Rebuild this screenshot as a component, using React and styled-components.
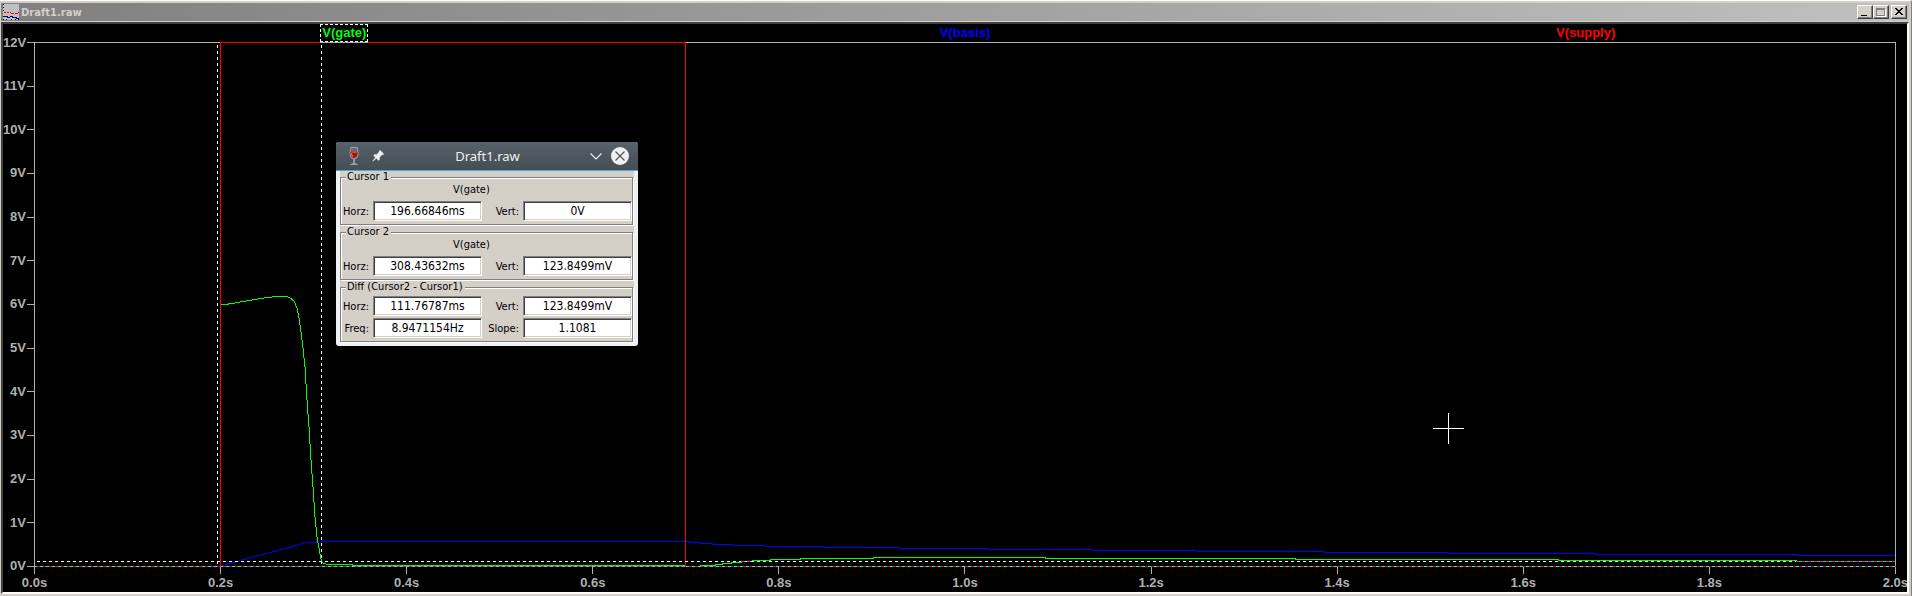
import React from "react";
import styled, { createGlobalStyle } from "styled-components";

const FACE = "#d4d0c8";
const AXIS = "#b0b0b0";
const GREEN = "#00ff00";
const BLUE = "#0000ff";
const RED = "#ff0000";

const GlobalStyle = createGlobalStyle`
  * { box-sizing: border-box; }
  body { margin: 0; background: ${FACE}; }
`;

/* ---------- plot window ---------- */

const PlotWindow = styled.div`
  display: flex;
  flex-direction: column;
  min-height: 100vh;
  padding: 2px 2px 2px 1px;
  background: ${FACE};
  border-top: 1px solid #fff;
  border-right: 1px solid #808080;
  overflow: hidden;
`;

const TitleBar = styled.header`
  display: flex;
  align-items: center;
  height: 18px;
  margin-bottom: 1px;
  padding: 0 2px;
  background: linear-gradient(90deg, #808080, #c0c0c0);
`;

const WindowTitle = styled.h1`
  flex: 1;
  margin: 0 0 0 2px;
  padding-top: 2px;
  font: bold 10px/16px "DejaVu Sans", Verdana, sans-serif;
  color: ${FACE};
`;

const WindowButton = styled.button`
  display: flex;
  width: 16px;
  height: 14px;
  margin: 0 0 0 ${(p) => (p.$apart ? "2px" : "0")};
  padding: 1px;
  background: ${FACE};
  border: 1px solid;
  border-color: #fff #404040 #404040 #fff;
  box-shadow: inset -1px -1px #808080;
`;

const Client = styled.main`
  position: relative;
  flex: 1;
  display: grid;
  grid-template-columns: 31px 1fr 11px;
  grid-template-rows: 18px 1fr 25px;
  background: #000;
  border: 2px solid;
  border-color: #404040 #fff #fff #404040;
  overflow: hidden;
  font: bold 13px/14px "Liberation Sans", Arial, sans-serif;
  color: ${AXIS};
`;

const Legend = styled.div`
  grid-column: 2;
  display: grid;
  grid-template-columns: repeat(3, 1fr);
  justify-items: center;
`;

const TraceName = styled.button`
  height: 18px;
  padding: 0 1px;
  background: none;
  border: 1px ${(p) => (p.$selected ? "dashed #fff" : "solid transparent")};
  font: inherit;
  line-height: 16px;
  color: ${(p) => p.$color};
`;

const YAxis = styled.div`
  grid-column: 1;
  grid-row: 2;
  display: flex;
  flex-direction: column;
  justify-content: space-between;
`;

const YTick = styled.div`
  display: flex;
  align-items: center;
  justify-content: flex-end;
  gap: 1px;
  height: 1px;

  &::after {
    content: "";
    width: 7px;
    height: 1px;
    background: ${AXIS};
  }
`;

const PlotArea = styled.div`
  position: relative;
  grid-column: 2;
  grid-row: 2;
  min-height: 300px;
`;

const Traces = styled.svg`
  position: absolute;
  inset: 0;
  width: 100%;
  height: 100%;
  fill: none;
  shape-rendering: crispEdges;

  path { vector-effect: non-scaling-stroke; }
`;

const Crosshair = styled.svg`
  position: absolute;
  left: 75.94%;
  top: 73.5%;
  width: 31px;
  height: 31px;
  margin: -15px 0 0 -15px;
`;

const XAxis = styled.div`
  grid-column: 2;
  grid-row: 3;
  display: flex;
  justify-content: space-between;
`;

const XTick = styled.div`
  display: flex;
  flex-direction: column;
  align-items: center;
  gap: 2px;
  width: 1px;

  &::before {
    content: "";
    width: 1px;
    height: 7px;
    background: ${AXIS};
  }
`;

/* ---------- cursor dialog ---------- */

const Dialog = styled.section`
  position: absolute;
  left: 333px;
  top: 118px;
  width: 302px;
  background: #eff0f1;
  border-radius: 3px;
  overflow: hidden;
  font: 11px/12px "DejaVu Sans Condensed", "DejaVu Sans", Tahoma, sans-serif;
  color: #000;
`;

const DialogBar = styled.header`
  display: grid;
  grid-template-columns: 35px 14px 1fr 12px 36px;
  align-items: center;
  height: 29px;
  background: linear-gradient(#57616a, #454d55);
  border-bottom: 1px solid #3daee9;
`;

const DialogTitle = styled.h2`
  margin: 0;
  font: 13px/20px "Noto Sans", sans-serif;
  color: #eff0f1;
  text-align: center;
`;

const BarButton = styled.button`
  display: flex;
  justify-content: center;
  padding: 0;
  background: none;
  border: 0;
`;

const AppIcon = styled.svg`
  justify-self: center;
  width: 12px;
  height: 20px;
`;

const DialogBody = styled.form`
  display: flex;
  flex-direction: column;
  gap: 1px;
  margin: 0 4px 4px;
  padding-right: 1px;
  background: ${FACE};
`;

const Group = styled.fieldset`
  min-width: 0;
  margin: 0;
  padding: 0 0 3px;
  border: 1px solid #808080;
  box-shadow: 1px 1px #fff, inset 1px 1px #fff;
`;

const GroupName = styled.legend`
  height: 12px;
  margin-left: 5px;
  padding: 0 2px 0 1px;
  background: ${FACE};
`;

const Signal = styled.div`
  padding: 1px 0 5px 112px;
`;

const Fields = styled.div`
  display: grid;
  grid-template-columns: 32px 109px 41px 109px;
  row-gap: 2px;
  align-items: center;
  padding-top: ${(p) => (p.$spaced ? "3px" : "0")};
`;

const FieldLabel = styled.label`
  padding: 1px 4px 0 0;
  text-align: right;
`;

const Value = styled.input`
  width: 100%;
  height: 20px;
  padding: 0 2px;
  background: #fff;
  border: 1px solid;
  border-color: #808080 #fff #fff #808080;
  border-radius: 0;
  box-shadow: inset 1px 1px #404040, inset -1px -1px ${FACE};
  font: inherit;
  font-size: 12px;
  color: #000;
  text-align: center;
`;

/* ---------- data ---------- */

const volts = Array.from({ length: 13 }, (_, i) => `${12 - i}V`);
const seconds = Array.from({ length: 11 }, (_, i) => `${(i * 0.2).toFixed(1)}s`);

const gate =
  "M220 304.5H225L232 303.5L243 301.5L255 299.5L267 297.5L277 296.5H287L290 298L294 301L297 308L299 318L301 332" +
  "L303 348L305 367L307 400L309 427L311 460L313 487L315 517L317 537L319 548L321.5 562L324 563.5L328 564.5H352V565.5H685" +
  "M700 565.5H715V564.5H722V563.5H731V562.5H741V561.5H752V560.5H770V559.5H800V558.5H873V557.5H1045V558.5H1295V559.5H1558V560.5H1796V561.5H1895";
const basis =
  "M220 566.5L225 564.5L238 561L257 556L283 549L307 542.5H318V541.5H689V542.5H700V543.5H712V544.5H732V545.5H765V546.5" +
  "H824V547.5H898V548.5H988V549.5H1093V550.5H1197V551.5H1324V552.5H1448V553.5H1595V554.5H1796V555.5H1895";

const groups = [
  { name: "Cursor 1", signal: "V(gate)", fields: [["Horz:", "196.66846ms"], ["Vert:", "0V"]] },
  { name: "Cursor 2", signal: "V(gate)", fields: [["Horz:", "308.43632ms"], ["Vert:", "123.8499mV"]] },
  {
    name: "Diff (Cursor2 - Cursor1)",
    fields: [["Horz:", "111.76787ms"], ["Vert:", "123.8499mV"], ["Freq:", "8.9471154Hz"], ["Slope:", "1.1081"]],
  },
];

function WaveIcon() {
  return (
    <svg width="16" height="16" viewBox="0 0 16 16" fill="none" shapeRendering="crispEdges" aria-hidden="true">
      <path fill="#c0c0c0" d="M0 0h16v16H0z" />
      <path stroke="#000" d="M0 .5h1M0 3.5h1M0 6.5h1M0 15.5h1M3 15.5h1M8 15.5h1M12 15.5h1M15 15.5h1" />
      <path stroke="#f00" d="M1 8.5h2M4 8.5h2M7 8.5h1M8 9.5h3M12 9.5h3M15 8.5h1" />
      <path stroke="#000080" d="M0 12.5h5M4 13.5h3M7 12.5h3M9 13.5h5M13 14.5h3" />
    </svg>
  );
}

function CursorDialog() {
  return (
    <Dialog role="dialog" aria-label="Draft1.raw">
      <DialogBar>
        <AppIcon viewBox="0 0 12 20" aria-hidden="true">
          <path d="M2.300 1h7.400l.8 6c.2 3.500-1.500 5.600-3.600 6.100V17l3 1.200v.9H2.100v-.9l3-1.200v-3.900C3 12.600 1.300 10.500 1.500 7z" fill="#9a9fa3" />
          <path d="M3.100 2h5.800l.4 3.500H2.700z" fill="#666d74" />
          <path d="M2.500 5.500h7c.5 4-1.200 6.500-3.500 6.500S2 9.500 2.500 5.500z" fill="#a81010" />
          <path d="M3.200 5.500h5.600V7H3.200z" fill="#e04040" />
          <path d="M3.600 7.500c0 1.600.5 2.400 1.300 3" stroke="#f3b0a8" fill="none" />
        </AppIcon>
        <BarButton type="button" aria-label="Keep on all desktops">
          <svg width="12" height="12" viewBox="0 0 12 12" fill="#eff0f1">
            <path d="M8 0l4 4-1 1-.8-.2-2.6 2.7.2 2-1.2 1.2L4.4 8.500 .8 11.500 .3 11l3.100-3.500L1.300 5.400l1.200-1.200 2 .200L7.200 1.800 7 1z" />
          </svg>
        </BarButton>
        <DialogTitle>Draft1.raw</DialogTitle>
        <BarButton type="button" aria-label="Minimize">
          <svg width="12" height="8" viewBox="0 0 12 8" fill="none" stroke="#eff0f1" strokeWidth="1.1">
            <path d="M.5 1.500L6 7l5.500-5.500" />
          </svg>
        </BarButton>
        <BarButton type="button" aria-label="Close">
          <svg width="18" height="18" viewBox="0 0 18 18">
            <circle cx="9" cy="9" r="9" fill="#eff0f1" />
            <path d="M4.500 4.500l9 9M13.500 4.500l-9 9" stroke="#475057" strokeWidth="1.1" />
          </svg>
        </BarButton>
      </DialogBar>
      <DialogBody>
        {groups.map((group, g) => (
          <Group key={group.name}>
            <GroupName>{group.name}</GroupName>
            {group.signal && <Signal>{group.signal}</Signal>}
            <Fields $spaced={!group.signal}>
              {group.fields.map(([label, value]) => {
                const id = `g${g}-${label.replace(":", "").toLowerCase()}`;
                return (
                  <React.Fragment key={id}>
                    <FieldLabel htmlFor={id}>{label}</FieldLabel>
                    <Value id={id} type="text" readOnly value={value} />
                  </React.Fragment>
                );
              })}
            </Fields>
          </Group>
        ))}
      </DialogBody>
    </Dialog>
  );
}

export default function App() {
  return (
    <>
      <GlobalStyle />
      <PlotWindow>
        <TitleBar>
          <WaveIcon />
          <WindowTitle>Draft1.raw</WindowTitle>
          <WindowButton type="button" aria-label="Minimize">
            <svg width="12" height="10" viewBox="0 0 12 10" shapeRendering="crispEdges">
              <path d="M2 8h6v1H2z" />
            </svg>
          </WindowButton>
          <WindowButton type="button" aria-label="Maximize">
            <svg width="12" height="10" viewBox="0 0 12 10" fill="none" shapeRendering="crispEdges">
              <path d="M1 1h9M1 2h9" stroke="#808080" />
              <path d="M1.500 1v8M9.500 1v8M1 8.500h9" stroke="#808080" />
              <path d="M10.500 2v8M2 9.500h9" stroke="#fff" />
            </svg>
          </WindowButton>
          <WindowButton type="button" aria-label="Close" $apart>
            <svg width="12" height="10" viewBox="0 0 12 10" shapeRendering="crispEdges">
              <path d="M2 1h2v1h1v1h2V2h1V1h2v1H9v1H8v1H7v1h1v1h1v1h1v1H8V7H7V6H5v1H4v1H2V7h1V6h1V5h1V4H4V3H3V2H2z" />
            </svg>
          </WindowButton>
        </TitleBar>
        <Client>
          <Legend>
            <TraceName type="button" $color={GREEN} $selected>V(gate)</TraceName>
            <TraceName type="button" $color={BLUE}>V(basis)</TraceName>
            <TraceName type="button" $color={RED}>V(supply)</TraceName>
          </Legend>
          <YAxis>
            {volts.map((v) => <YTick key={v}>{v}</YTick>)}
          </YAxis>
          <PlotArea>
            <Traces viewBox="34 42 1862 525" preserveAspectRatio="none" role="img" aria-label="Voltage over time">
              <path d="M34.500 566.500V42.500H1895.500V566.500" stroke={AXIS} />
              <path d="M220 566.500H686" stroke="#505050" />
              <path d="M220 566.500H686" stroke={AXIS} strokeDasharray="3 3" />
              <path d={basis} stroke={BLUE} />
              <path d={gate} stroke={GREEN} />
              <path d="M34 566.500H220.500V42.500H320M368 42.500H685.500V566.500H1896" stroke={RED} />
              <path d="M34 566.500H220M686 566.500H1896" stroke="#00ffff" strokeDasharray="3 3" />
              <path d="M217.500 45V566M321.500 45V566M37 561.500H1796" stroke="#fff" strokeDasharray="3 3" />
              <path d="M741 561.500H752M1796 561.500H1895" stroke="#ff00ff" strokeDasharray="3 3" />
            </Traces>
            <Crosshair viewBox="0 0 31 31" shapeRendering="crispEdges" aria-hidden="true">
              <path d="M15.500 0V31M0 15.500H31" stroke="#fff" />
            </Crosshair>
          </PlotArea>
          <XAxis>
            {seconds.map((s) => <XTick key={s}>{s}</XTick>)}
          </XAxis>
          <CursorDialog />
        </Client>
      </PlotWindow>
    </>
  );
}
